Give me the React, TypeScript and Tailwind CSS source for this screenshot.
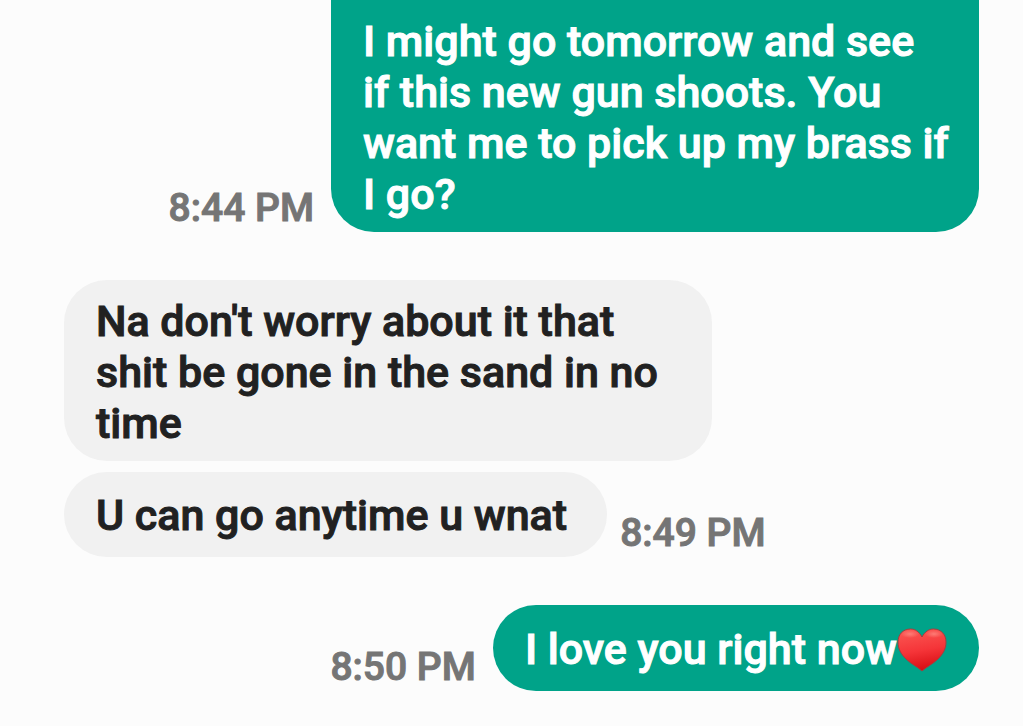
import React from "react";

type Bubble = { text: React.ReactNode; time?: string; wide?: boolean };

function Heart() {
  return (
    <svg role="img" aria-label="Red heart" viewBox="0 0 50 44" className="h-11 w-[50px] shrink-0">
      <defs>
        <linearGradient id="heart-fill" x1="0.4" y1="0" x2="0.6" y2="1">
          <stop offset="0" stopColor="#fa5652" />
          <stop offset="0.5" stopColor="#f53539" />
          <stop offset="1" stopColor="#d60a10" />
        </linearGradient>
        <radialGradient id="heart-shine">
          <stop offset="0" stopColor="#ff9088" stopOpacity="0.7" />
          <stop offset="1" stopColor="#ff9088" stopOpacity="0" />
        </radialGradient>
      </defs>
      <path d="M25 9C22 3.500 18 1 13.500 1C6 1 1 6.500 1 14C1 21 4 26 9 31C14 36 20 38.500 25 43C30 38.500 36 36 41 31C46 26 49 21 49 14C49 6.500 44 1 36.500 1C32 1 28 3.500 25 9Z" fill="url(#heart-fill)" stroke="#a04040" strokeWidth="1" />
      <ellipse cx="13" cy="6" rx="9" ry="4" fill="url(#heart-shine)" />
      <ellipse cx="37" cy="6" rx="9" ry="4" fill="url(#heart-shine)" />
    </svg>
  );
}

function Time({ value }: { value?: string }) {
  return (
    <time className="pb-1 text-[39px] leading-10 font-medium text-[#757575]">
      {value}
    </time>
  );
}

function Sent({ text, time, wide }: Bubble) {
  return (
    <div className="flex items-end justify-end gap-[17px]">
      <Time value={time} />
      <div className={wide ? "w-[648px] rounded-b-[43px] bg-[#00a389] pt-4 pr-6 pb-3 pl-8 whitespace-pre-line text-white" : "flex items-center rounded-[43px] bg-[#00a389] px-8 pt-[19px] pb-4 text-white"}>
        {text}
      </div>
    </div>
  );
}

function Received({ text, time, wide }: Bubble) {
  return (
    <div className="flex items-end gap-[13px]">
      <div className={wide ? "w-[648px] rounded-[43px] bg-[#f1f1f1] px-8 pt-4 pb-3" : "rounded-[43px] bg-[#f1f1f1] pt-[18px] pr-10 pb-4 pl-8"}>
        {text}
      </div>
      {time && <Time value={time} />}
    </div>
  );
}

export default function App() {
  return (
    <main className="flex min-h-screen flex-col bg-[#fcfcfc] pr-11 pl-16 font-['Roboto',sans-serif] text-[43px] leading-[51px] font-medium text-[#212121] [-webkit-text-stroke:1px_currentColor]">
      <Sent wide time="8:44 PM" text={"I might go tomorrow and see\nif this new gun shoots. You\nwant me to pick up my brass if\nI go?"} />
      <div className="mt-12 flex flex-col gap-[11px]">
        <Received wide text="Na don't worry about it that shit be gone in the sand in no time" />
        <Received time="8:49 PM" text="U can go anytime u wnat" />
      </div>
      <div className="mt-12">
        <Sent time="8:50 PM" text={<>I love you right now<Heart /></>} />
      </div>
    </main>
  );
}
